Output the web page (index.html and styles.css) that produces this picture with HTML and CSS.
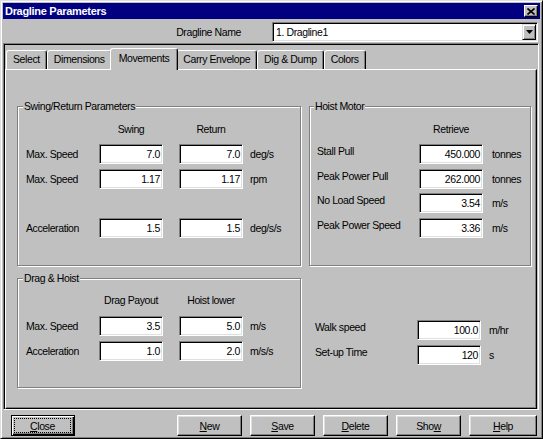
FILE: index.html
```html
<!DOCTYPE html>
<html lang="en">
<head>
    <meta charset="UTF-8">
    <title>Dragline Parameters</title>
    <link rel="stylesheet" href="styles.css">
</head>
<body>
    <div class="window">
        <div class="titlebar">
            <span class="title">Dragline Parameters</span>
            <span class="title-close">
                <svg width="8" height="7" viewBox="0 0 8 7"><path d="M0.5 0.5L7.5 6.5M7.5 0.5L0.5 6.5" stroke="#000" stroke-width="1.6" fill="none"/></svg>
            </span>
        </div>

        <div class="name-row">
            <span class="name-label">Dragline Name</span>
            <div class="combo">
                <span class="combo-text">1. Dragline1</span>
                <span class="combo-btn">
                    <svg width="7" height="4" viewBox="0 0 7 4"><path d="M0 0H7L3.5 4Z" fill="#000"/></svg>
                </span>
            </div>
        </div>

        <div class="frame">
            <div class="tabs">
                <div class="tab">Select</div>
                <div class="tab">Dimensions</div>
                <div class="tab tab-active">Movements</div>
                <div class="tab">Carry Envelope</div>
                <div class="tab">Dig &amp; Dump</div>
                <div class="tab">Colors</div>
            </div>

            <div class="page">
                <!-- swing / return -->
                <div class="group">
                    <div class="legend">Swing/Return Parameters</div>
                    <div class="row head">
                        <span class="label"></span>
                        <span class="col">Swing</span>
                        <span class="col">Return</span>
                    </div>
                    <div class="row">
                        <span class="label">Max. Speed</span>
                        <span class="field">7.0</span>
                        <span class="field">7.0</span>
                        <span class="unit">deg/s</span>
                    </div>
                    <div class="row">
                        <span class="label">Max. Speed</span>
                        <span class="field">1.17</span>
                        <span class="field">1.17</span>
                        <span class="unit">rpm</span>
                    </div>
                    <div class="row row-far">
                        <span class="label">Acceleration</span>
                        <span class="field">1.5</span>
                        <span class="field">1.5</span>
                        <span class="unit">deg/s/s</span>
                    </div>
                </div>

                <!-- hoist motor -->
                <div class="group group-hoist">
                    <div class="legend">Hoist Motor</div>
                    <div class="row head">
                        <span class="label"></span>
                        <span class="col">Retrieve</span>
                    </div>
                    <div class="row">
                        <span class="label">Stall Pull</span>
                        <span class="field">450.000</span>
                        <span class="unit">tonnes</span>
                    </div>
                    <div class="row">
                        <span class="label">Peak Power Pull</span>
                        <span class="field">262.000</span>
                        <span class="unit">tonnes</span>
                    </div>
                    <div class="row row-tight">
                        <span class="label">No Load Speed</span>
                        <span class="field">3.54</span>
                        <span class="unit">m/s</span>
                    </div>
                    <div class="row">
                        <span class="label">Peak Power Speed</span>
                        <span class="field">3.36</span>
                        <span class="unit">m/s</span>
                    </div>
                </div>

                <!-- drag & hoist -->
                <div class="group group-drag">
                    <div class="legend">Drag &amp; Hoist</div>
                    <div class="row head">
                        <span class="label"></span>
                        <span class="col">Drag Payout</span>
                        <span class="col">Hoist lower</span>
                    </div>
                    <div class="row row-first">
                        <span class="label">Max. Speed</span>
                        <span class="field">3.5</span>
                        <span class="field">5.0</span>
                        <span class="unit">m/s</span>
                    </div>
                    <div class="row">
                        <span class="label">Acceleration</span>
                        <span class="field">1.0</span>
                        <span class="field">2.0</span>
                        <span class="unit">m/s/s</span>
                    </div>
                </div>

                <!-- walk -->
                <div class="walk">
                    <div class="row">
                        <span class="label">Walk speed</span>
                        <span class="field">100.0</span>
                        <span class="unit">m/hr</span>
                    </div>
                    <div class="row">
                        <span class="label">Set-up Time</span>
                        <span class="field">120</span>
                        <span class="unit">s</span>
                    </div>
                </div>
            </div>
        </div>

        <div class="buttons">
            <button class="btn btn-close btn-default"><span class="focus"><u>C</u>lose</span></button>
            <button class="btn"><u>N</u>ew</button>
            <button class="btn"><u>S</u>ave</button>
            <button class="btn"><u>D</u>elete</button>
            <button class="btn">Sho<u>w</u></button>
            <button class="btn btn-help"><u>H</u>elp</button>
        </div>
    </div>
</body>
</html>
```

FILE: styles.css
```css
body {
    margin: 0;
    background: #c0c0c0;
    font-family: "Liberation Sans", Arial, sans-serif;
    font-size: 10.5px;
    letter-spacing: -0.4px;
    color: #000;
}

/* outer dialog */
.window {
    width: 543px;
    height: 439px;
    box-sizing: border-box;
    border: 1px solid;
    border-color: #dfdfdf #000 #000 #dfdfdf;
    box-shadow: inset 1px 1px #fff, inset -1px -1px #808080;
    padding: 2px;
    display: flex;
    flex-direction: column;
}

.titlebar {
    height: 16px;
    background: #000080;
    color: #fff;
    font-size: 11px;
    font-weight: bold;
    letter-spacing: -0.3px;
    display: flex;
    align-items: center;
    padding: 0 2px;
}
.title-close {
    width: 14px;
    height: 12px;
    margin-left: auto;
    box-sizing: border-box;
    background: #c0c0c0;
    border: 1px solid;
    border-color: #fff #000 #000 #fff;
    box-shadow: inset -1px -1px #808080;
    display: flex;
    align-items: center;
    justify-content: center;
}

.name-row {
    display: flex;
    justify-content: flex-end;
    align-items: center;
    padding: 3px 2px 1px 0;
}
.name-label {
    margin-right: 31px;
}
.combo {
    width: 266px;
    height: 20px;
    box-sizing: border-box;
    background: #fff;
    border: 1px solid;
    border-color: #808080 #fff #fff #808080;
    box-shadow: inset 1px 1px #000, inset -1px -1px #dfdfdf;
    display: flex;
    align-items: center;
}
.combo-text {
    flex: 1;
    padding-left: 3px;
}
.combo-btn {
    width: 14px;
    height: 16px;
    margin-right: 1px;
    box-sizing: border-box;
    background: #c0c0c0;
    border: 1px solid;
    border-color: #dfdfdf #000 #000 #dfdfdf;
    box-shadow: inset 1px 1px #fff, inset -1px -1px #808080;
    display: flex;
    align-items: center;
    justify-content: center;
}

/* sunken area holding the tab control */
.frame {
    flex: 1;
    margin-right: 1px;
    border: 1px solid;
    border-color: #808080 #fff #fff #808080;
    box-shadow: inset 1px 1px #000;
    display: flex;
    flex-direction: column;
}

.tabs {
    display: flex;
    align-items: flex-end;
    height: 21px;
    margin-top: 4px;
    padding-left: 2px;
}
.tab {
    height: 19px;
    box-sizing: border-box;
    padding: 0 6px;
    border: 1px solid;
    border-bottom: 0;
    border-color: #fff #000 #000 #fff;
    border-radius: 3px 3px 0 0;
    box-shadow: inset -1px 0 #808080;
    line-height: 17px;
    white-space: nowrap;
}
.tab-active {
    height: 22px;
    margin: 0 -2px -1px;
    padding: 0 8px;
    position: relative;
    z-index: 1;
    background: #c0c0c0;
    line-height: 19px;
}

.page {
    flex: 1;
    margin: 0 1px;
    border: 1px solid;
    border-color: #fff #000 #000 #fff;
    box-shadow: inset -1px -1px #808080;
    padding: 36px 0 0 11px;
    display: grid;
    grid-template-columns: 284px 222px;
    grid-template-rows: 160px 110px;
    gap: 12px 8px;
    align-content: start;
}

/* etched group boxes */
.group {
    border: 1px solid #808080;
    box-shadow: inset 1px 1px #fff, 1px 1px #fff;
    padding: 0 8px;
}
.group-hoist {
    padding-left: 7px;
}
.legend {
    width: fit-content;
    margin: -7px 0 0 -3px;
    padding: 0 1px;
    line-height: 13px;
    background: #c0c0c0;
}

.row {
    display: flex;
    align-items: center;
    height: 20px;
    margin-top: 5px;
}
.head {
    margin-top: 6px;
}
.group-drag .head {
    margin-top: 5px;
}
.row-first {
    margin-top: 6px;
}
.row-far {
    margin-top: 29px;
}
.row-tight {
    margin-top: 4px;
}
.label {
    width: 73px;
    flex: none;
}
.col {
    width: 64px;
    text-align: center;
}
.col + .col {
    margin-left: 16px;
}
.field {
    width: 64px;
    height: 20px;
    box-sizing: border-box;
    background: #fff;
    border: 1px solid;
    border-color: #808080 #fff #fff #808080;
    box-shadow: inset 1px 1px #000, inset -1px -1px #dfdfdf;
    padding: 0 2px;
    line-height: 18px;
    text-align: right;
}
.field + .field {
    margin-left: 16px;
}
.unit {
    margin-left: 7px;
}

.group-hoist .label,
.walk .label {
    width: 102px;
    align-self: flex-start;
    padding-top: 1px;
}
.group-hoist .unit {
    margin-left: 9px;
}

.walk {
    padding: 42px 0 0 6px;
}
.walk .row:first-child {
    margin-top: 0;
}
.walk .unit {
    margin-left: 8px;
}

/* bottom buttons */
.buttons {
    display: flex;
    gap: 8px;
    margin-top: 5px;
    padding: 0 3px 0 8px;
}
.btn {
    width: 65px;
    height: 21px;
    box-sizing: border-box;
    padding: 0;
    font-family: inherit;
    font-size: inherit;
    letter-spacing: inherit;
    color: #000;
    background: #c0c0c0;
    border: 1px solid;
    border-color: #fff #000 #000 #fff;
    box-shadow: inset -1px -1px #808080, inset 1px 1px #dfdfdf;
    display: flex;
    align-items: center;
    justify-content: center;
}
.btn-close {
    width: 64px;
    margin-right: auto;
}
.btn-help {
    width: 68px;
}
.btn-default {
    border-color: #000;
    box-shadow: inset 1px 1px #fff, inset -1px -1px #000, inset -2px -2px #808080;
}
.focus {
    flex: 1;
    align-self: stretch;
    margin: 2px 3px 2px 2px;
    border: 1px dotted #000;
    display: flex;
    align-items: center;
    justify-content: center;
}
```
